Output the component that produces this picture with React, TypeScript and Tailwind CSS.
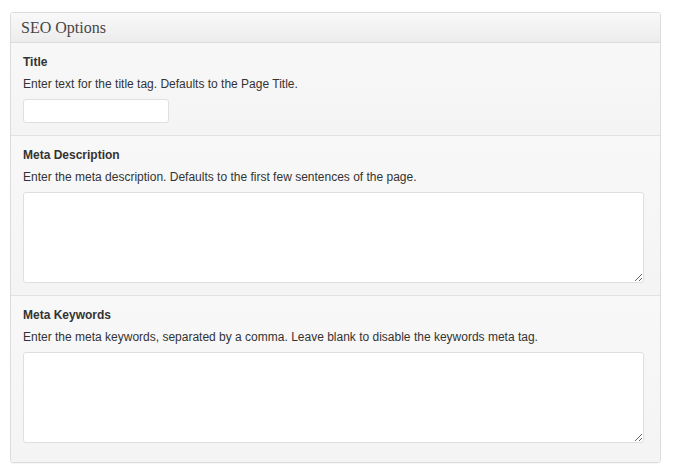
const sans = { fontFamily: '"Liberation Sans", Arial, sans-serif' };

function Field({
  label,
  help,
  children,
  last,
}: {
  label: string;
  help: string;
  children: React.ReactNode;
  last?: boolean;
}) {
  return (
    <div
      className={`px-3 pt-[10px] bg-gradient-to-b from-[#f8f8f8] to-[#f4f4f4] ${
        last ? "pb-[19px]" : "pb-3 border-b border-[#e1e1e1]"
      }`}
    >
      <div className="text-[12px] leading-[18px] font-bold text-[#333]">{label}</div>
      <p className="mt-1 text-[12px] leading-[18px] text-[#333]">{help}</p>
      <div className="mt-[6px]">{children}</div>
    </div>
  );
}

export default function App() {
  return (
    <div className="min-h-screen bg-white pt-3 pl-[10px] pr-3" style={sans}>
      <div className="w-[651px] border border-[#dcdcdc] rounded-[3px] overflow-hidden shadow-[0_1px_1px_rgba(0,0,0,0.04)]">
        <div className="h-[30px] px-[10px] flex items-center border-b border-[#dcdcdc] bg-gradient-to-b from-[#f9f9f9] to-[#ececec]">
          <h3
            className="text-[16px] text-[#464646]"
            style={{ fontFamily: '"Liberation Serif", Georgia, serif' }}
          >
            SEO Options
          </h3>
        </div>

        <Field label="Title" help="Enter text for the title tag. Defaults to the Page Title.">
          <input
            type="text"
            className="block w-[146px] h-[24px] bg-white border border-[#dfdfdf] rounded-[3px] outline-none"
          />
        </Field>

        <Field
          label="Meta Description"
          help="Enter the meta description. Defaults to the first few sentences of the page."
        >
          <textarea className="block w-[621px] h-[91px] bg-white border border-[#dfdfdf] rounded-[3px] outline-none" />
        </Field>

        <Field
          label="Meta Keywords"
          help="Enter the meta keywords, separated by a comma. Leave blank to disable the keywords meta tag."
          last
        >
          <textarea className="block w-[621px] h-[91px] bg-white border border-[#dfdfdf] rounded-[3px] outline-none" />
        </Field>
      </div>
    </div>
  );
}
